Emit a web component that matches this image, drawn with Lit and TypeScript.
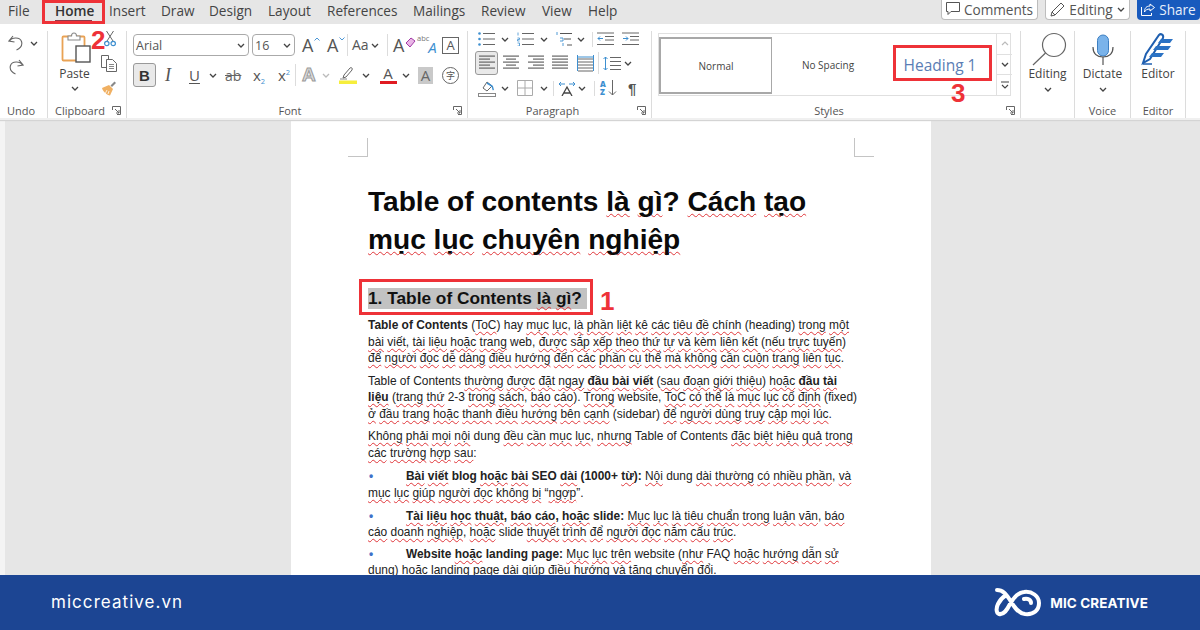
import { LitElement, html, svg, css, TemplateResult } from "lit";
import { customElement } from "lit/decorators.js";

type Cell = [number, TemplateResult];

const chev = html`<svg class="chev" width="8" height="5" viewBox="0 0 8 5"><path d="M1 1l3 3 3-3" fill="none" stroke="#444" stroke-width="1.3"/></svg>`;

const bars = (rows: [number, number][], color = "#666", w = 16) => html`<svg width="${w}" height="${rows.length * 3 + 1}" viewBox="0 0 ${w} ${rows.length * 3 + 1}">${rows.map(
  ([a, b], i) => svg`<rect x="${a}" y="${i * 3 + 0.5}" width="${b - a}" height="1.2" fill="${color}"></rect>`
)}</svg>`;

const launcher = html`<svg class="launch" width="9" height="9" viewBox="0 0 9 9"><path d="M.5 4V.5H8.5V8.5H5M3 3l4 4M7 4v3H4" fill="none" stroke="#666" stroke-width="1"/></svg>`;

const undoI = html`<svg width="16" height="16" viewBox="0 0 16 16"><path d="M5 1L1 6l5.5 1M1.5 6C4 2 12 2 13.5 6.5 15 11 11 14 8.5 15" fill="none" stroke="#666" stroke-width="1.1"/></svg>`;
const redoI = html`<svg width="16" height="16" viewBox="0 0 16 16"><path d="M11 1l4 5-5.500 1M14.500 6C12 2 4 2 2.500 6.500 1 11 5 14 7.500 15" fill="none" stroke="#666" stroke-width="1.1"/></svg>`;
const pasteI = html`<svg class="pi" width="32" height="32" viewBox="0 0 32 32"><rect x="1.500" y="5.500" width="22" height="24" rx="1" fill="#fff" stroke="#e9a254" stroke-width="1.800"/><path d="M7 9V5h3.500c0-4 5-4 5 0H19v4z" fill="#fff" stroke="#8a8a8a" stroke-width="1.100"/><rect x="15" y="15" width="14" height="16" fill="#fff" stroke="#555" stroke-width="1.400"/></svg>`;
const scissorsI = html`<svg width="12" height="16" viewBox="0 0 12 16"><path d="M3 10L9.500 0M9 10L2.500 0" stroke="#666" fill="none" stroke-width="1"/><circle cx="2.800" cy="12.500" r="2.200" fill="none" stroke="#3d8fd0" stroke-width="1.200"/><circle cx="9.200" cy="12.500" r="2.200" fill="none" stroke="#3d8fd0" stroke-width="1.200"/></svg>`;
const copyI = html`<svg width="17" height="17" viewBox="0 0 17 17"><path d="M.5.500h7v12h-7z" fill="#fff" stroke="#666"/><path d="M5.500 4.500h6l4 4v8h-10z" fill="#fff" stroke="#666"/><path d="M8 9.500h5M8 11.500h5M8 13.500h5" stroke="#888"/></svg>`;
const painterI = html`<svg width="17" height="17" viewBox="0 0 17 17"><path d="M1 9l7-3 4 4-3 6.500C6 16 2 13 1 9z" fill="#f0b062"/><path d="M4 15l2-4M7 15l1-3" stroke="#fff" stroke-width=".8"/><path d="M9.500 6.500l4-4 1.500 1.500-4 4z" fill="#888"/></svg>`;
const glassI = html`<svg width="44" height="34" viewBox="0 0 44 34"><circle cx="28" cy="13" r="11.500" fill="#fff" stroke="#666" stroke-width="1.200"/><path d="M19.500 21L7 33" stroke="#666" stroke-width="1.200"/></svg>`;
const micI = html`<svg width="22" height="32" viewBox="0 0 22 32"><rect x="5.500" y="1" width="11" height="21" rx="5.500" fill="#7ab3ea" stroke="#3d7fc2" stroke-width="1"/><path d="M1 14c0 7 4 10 10 10s10-3 10-10" transform="translate(0 -1)" fill="none" stroke="#555" stroke-width="1.200"/><path d="M11 23v8" stroke="#555" stroke-width="1.200"/></svg>`;
const editorI = html`<svg width="34" height="34" viewBox="0 0 34 34"><path d="M2 31l3-9L18 3c2-2 5 0 4 3L9 27z" fill="#fff" stroke="#1f5fb0" stroke-width="2"/><path d="M20 7h12l-3 4H17zM15 14h15l-3 4H12zM11 21h12l-3 4H8z" fill="#2b72c4"/><path d="M2 32h9" stroke="#1f5fb0" stroke-width="1.500"/></svg>`;
const penI = html`<svg class="hl" width="18" height="18" viewBox="0 0 18 18"><path d="M4 12l1-3 6-7c1-1 3 0 2 2l-6 7z" fill="#fff" stroke="#666"/><path d="M1 13h7" stroke="#888"/><rect x="0" y="14.500" width="18" height="3.500" fill="#f6ee3c"/></svg>`;
const eraserI = html`<svg width="11" height="11" viewBox="0 0 11 11"><path d="M1 6l5-5 4 3-5 6z" fill="#e9b6e6" stroke="#a13aa6"/></svg>`;
const caret = (d: string) => html`<svg width="6" height="4" viewBox="0 0 6 4"><path d="${d}" fill="none" stroke="#4c97d6" stroke-width="1"/></svg>`;
const bulletsI = html`<svg width="17" height="14" viewBox="0 0 17 14"><path d="M5 1.500h12M5 7h12M5 12.500h12" stroke="#666"/><circle cx="1.500" cy="1.500" r="1.300" fill="#3d8fd0"/><circle cx="1.500" cy="7" r="1.300" fill="#3d8fd0"/><circle cx="1.500" cy="12.500" r="1.300" fill="#3d8fd0"/></svg>`;
const numI = html`<svg width="17" height="14" viewBox="0 0 17 14"><path d="M5 1.500h12M5 7h12M5 12.500h12" stroke="#666"/><path d="M1 .5v3M.5 6h2v1.500h-2v1.500h2M.5 11h2v3h-2" stroke="#3d8fd0" fill="none" stroke-width=".8"/></svg>`;
const multiI = html`<svg width="17" height="15" viewBox="0 0 17 15"><path d="M4 1.500h12M8 7h7M11 13h5" stroke="#555"/><path d="M1 0v3M4 6h3v3H4M7 11v3" stroke="#3d8fd0" fill="none" stroke-width=".9"/></svg>`;
const outdentI = html`<svg width="17" height="14" viewBox="0 0 17 14"><path d="M0 1h17M8 4.500h9M8 8h9M0 12.500h17" stroke="#666"/><path d="M6 6.500H1M3 4.500l-2 2 2 2" stroke="#3d8fd0" fill="none"/></svg>`;
const indentI = html`<svg width="17" height="14" viewBox="0 0 17 14"><path d="M0 1h17M8 4.500h9M8 8h9M0 12.500h17" stroke="#666"/><path d="M1 6.500h5M4 4.500l2 2-2 2" stroke="#3d8fd0" fill="none"/></svg>`;
const distI = html`<svg width="17" height="17" viewBox="0 0 17 17"><path d="M1 4h15M1 7h15M1 10h15M1 13h15M1 16h15" stroke="#666"/><path d="M.5 0v4M16.500 0v4M1 2h15" stroke="#3d8fd0" fill="none"/><path d="M.5 4v12M16.500 4v12" stroke="#3d8fd0" fill="none"/></svg>`;
const spaceI = html`<svg width="18" height="15" viewBox="0 0 18 15"><path d="M7 1.500h11M7 5.500h11M7 9.500h11M7 13.500h11" stroke="#666"/><path d="M2.500 1v13M.5 3l2-2 2 2M.5 12l2 2 2-2" stroke="#3d8fd0" fill="none"/></svg>`;
const shadeI = html`<svg width="18" height="17" viewBox="0 0 18 17"><path d="M5 8l4-6 5 4-5 5z" fill="#fff" stroke="#666"/><path d="M9 3l5 3c1 1 .5 3 1.500 4" fill="none" stroke="#3d8fd0" stroke-width="1.500"/><rect x=".5" y="13.500" width="17" height="3" fill="#fff" stroke="#888"/></svg>`;
const borderI = html`<svg width="16" height="16" viewBox="0 0 16 16"><path d="M.5.500h15v15H.5zM8 .5v15M.5 8h15" fill="none" stroke="#aaa"/></svg>`;
const dirI = html`<svg width="18" height="15" viewBox="0 0 18 15"><path d="M4 15l5-9 5 9M6 12h6" fill="none" stroke="#444" stroke-width="1.300"/><path d="M1 3h6M3 1L1 3l2 2M11 3h6M15 1l2 2-2 2" fill="none" stroke="#3d8fd0"/></svg>`;
const sortI = html`<svg width="9" height="16" viewBox="0 0 9 16"><path d="M4.500 0v15M1 11.500l3.500 3.500 3.500-3.500" fill="none" stroke="#666"/></svg>`;
const commentI = html`<svg width="14" height="14" viewBox="0 0 14 14"><path d="M.5.500h13v9H5l-3 3v-3H.5z" fill="none" stroke="#555"/></svg>`;
const pencilI = html`<svg width="15" height="15" viewBox="0 0 15 15"><path d="M1 14l1-4L11 1l3 3-9 9zM2 10l3 3" fill="none" stroke="#555"/></svg>`;
const shareI = html`<svg width="14" height="13" viewBox="0 0 14 13"><path d="M9 1l4.500 3.500L9 8V6C6 6 4.500 7 3.500 9c0-4 2-6 5.500-6zM.5 4v8.500h10V10" fill="none" stroke="#fff" stroke-width="1"/></svg>`;
const logoI = html`<svg width="48" height="30" viewBox="0 0 48 30"><path d="M3 2c6 0 9 4 13 10 4 7 8 13 15 14 9 1 14-4 14-11S38 3 30 4c-6 .5-10 5-14 12-3 6-6 11-11 10C2 25 2 20 4 16c2-4 5-7 8-9M30 11c4-1 7 1 7 4" fill="none" stroke="#fff" stroke-width="4" stroke-linecap="round"/></svg>`;

@customElement("app-root")
export class AppRoot extends LitElement {
  static styles = css`
    :host { display: block; width: 1200px; height: 630px; position: relative; overflow: hidden; font-family: "Open Sans", "Noto Sans", sans-serif; color: #444; background: #e6e6e6; }
    .app { display: flex; flex-direction: column; height: 630px; }
    .row { display: flex; align-items: center; white-space: nowrap; }
    .cell { display: flex; align-items: center; flex: none; }
    .tabs { height: 24px; background: #e6e6e6; flex: none; justify-content: space-between; }
    .tabrow { display: flex; align-items: center; height: 24px; font-size: 13.6px; color: #444; padding-bottom: 4px; box-sizing: border-box; }
    .home { font-weight: 600; color: #333; position: relative; }
    .home::after { content: ""; position: absolute; left: 0; top: 19px; width: 37px; height: 1px; background: #8c3a4a; }
    .actions { display: flex; align-items: flex-start; height: 24px; gap: 7px; font-size: 13.6px; }
    .act { height: 20px; box-sizing: border-box; border: 1px solid #bdbdbd; border-top: 0; border-radius: 0 0 4px 4px; background: #fff; display: flex; align-items: center; justify-content: center; gap: 4px; color: #555; padding-bottom: 1px; }
    .a1 { width: 97px; } .a2 { width: 85px; }
    .a3 { width: 63px; background: #185abd; border: 0; color: #e8f0fb; }
    .ribbon { height: 96px; flex: none; display: flex; background: #fff; padding-top: 7px; box-sizing: border-box; border-bottom: 2px solid #f0f0f0; box-shadow: 0 1px 1px #d4d4d4; position: relative; }
    .group { display: flex; flex-direction: column; flex: none; height: 87px; box-sizing: border-box; border-right: 1px solid #dcdcdc; }
    .g-undo { width: 48px; } .g-clip { width: 79px; } .g-font { width: 341px; } .g-para { width: 184px; }
    .g-styles { width: 369px; } .g-edit { width: 54px; } .g-voice { width: 56px; } .g-editor { width: 55px; }
    .gbody { height: 72px; flex: none; }
    .glabel { display: flex; align-items: center; height: 15px; font-size: 11px; color: #555; padding-right: 5px; }
    .glabel.n { padding-right: 0; }
    .glabel span { flex: 1; text-align: center; }
    .launch { flex: none; }
    .paste, .big { display: flex; flex-direction: column; align-items: center; flex: none; }
    .clipwrap { display: flex; }
    .paste { width: 53px; font-size: 12px; color: #444; }
    .pi { margin-left: 4px; }
    .paste .txt { line-height: 16px; margin-top: 3px; }
    .paste .chev { margin-top: 4px; }
    .clipside { display: flex; flex-direction: column; gap: 7.5px; align-items: center; width: 17px; }
    .big { font-size: 12px; color: #444; height: 72px; }
    .big .ic { height: 35px; display: flex; align-items: flex-end; }
    .big .txt { line-height: 16px; }
    .big .chev { margin-top: 5px; }
    .combo { height: 22px; box-sizing: border-box; border: 1px solid #aaa; border-radius: 4px; display: flex; align-items: center; justify-content: space-between; padding: 0 3px 0 2px; font-size: 12.5px; color: #555; }
    .c-font { width: 116px; } .c-size { width: 43px; }
    .sel { width: 23px; height: 24px; box-sizing: border-box; border: 1px solid #999; border-radius: 3px; background: #e9e9e9; display: flex; align-items: center; justify-content: center; }
    .tx { font-size: 18px; line-height: 20px; color: #555; display: inline-flex; align-items: flex-start; }
    .tx svg { margin-top: 2px; margin-left: 1px; }
    .tx.s { font-size: 14px; gap: 2px; align-items: center; }
    .tx.s svg { margin: 0; }
    .tb { font-family: "Liberation Sans", sans-serif; font-weight: 700; font-size: 15px; color: #333; }
    .ti { font-family: "Liberation Serif", serif; font-style: italic; font-size: 18px; color: #555; }
    .tu { font-size: 15px; text-decoration: underline; text-underline-offset: 2px; color: #555; }
    .tab { font-size: 14px; text-decoration: line-through; color: #666; }
    .tsub { font-size: 15px; color: #555; line-height: 20px; display: inline-flex; }
    .tsub em { font-style: normal; font-size: 7.5px; line-height: 8px; color: #3d8fd0; }
    .tsub .dn { margin-top: 12px; }
    .tsub .up { margin-top: 3px; }
    .fx { font-family: "Liberation Sans", sans-serif; font-weight: 700; font-size: 19px; color: #ddd; -webkit-text-stroke: 1px #9a9a9a; }
    .fc { display: flex; flex-direction: column; width: 18px; align-items: center; font-size: 15px; line-height: 15px; color: #555; }
    .fc i { display: block; width: 17px; height: 3px; background: #e01b22; }
    .shade { width: 15px; height: 17px; background: #c9c9c9; font-size: 15px; line-height: 17px; text-align: center; color: #666; }
    .abox { width: 15px; height: 15px; border: 1px solid #666; font-size: 13px; line-height: 15px; text-align: center; color: #555; }
    .zi { width: 15px; height: 15px; border: 1px solid #666; border-radius: 50%; font: 9px/15px "Noto Sans CJK SC", sans-serif; text-align: center; color: #555; }
    .abc { display: inline-flex; align-items: flex-start; line-height: 1; }
    .abc small { font-size: 7.5px; color: #777; margin-top: 0; }
    .abc em { font-size: 15px; color: #3d8fd0; margin-left: -1px; margin-top: 5px; }
    .vsep { width: 1px; height: 22px; background: #dcdcdc; display: block; }
    .vsep.t { height: 15px; }
    .pil { font-family: "Liberation Sans", sans-serif; font-weight: 700; font-size: 15px; color: #555; }
    .az { font-size: 8px; line-height: 8px; color: #3d8fd0; display: flex; flex-direction: column; font-weight: 600; }
    .sort { display: flex; gap: 2px; align-items: center; }
    .gallery { display: flex; height: 63px; margin: 2px 9px 0 6px; border: 1px solid #e0e0e0; box-sizing: border-box; }
    .sty { display: flex; align-items: center; justify-content: center; font-size: 10px; color: #444; flex: none; }
    .s-n { width: 113px; height: 57px; margin: 3px 0 0 0; box-sizing: border-box; border: 2px solid #a8a8a8; border-right-width: 1px; }
    .s-s { width: 112px; }
    .s-h { width: 112px; font-size: 15.500px; color: #5a7db5; }
    .scroll { display: flex; flex-direction: column; width: 15px; margin-left: auto; border-left: 1px solid #e0e0e0; flex: none; }
    .scroll span { flex: 1; display: flex; align-items: center; justify-content: center; border-bottom: 1px solid #e0e0e0; }
    .scroll span:last-child { border-bottom: 0; }
    .doc { flex: 1; min-height: 0; display: flex; overflow: hidden; background: #e6e6e6; }
    .strip { width: 5px; background: #f4f4f4; flex: none; }
    .page { width: 640px; margin-left: 286px; flex: none; background: #fff; padding-top: 18px; box-sizing: border-box; font-family: "Liberation Sans", Arial, sans-serif; color: #1a1a1a; }
    .marks { display: flex; justify-content: space-between; padding: 0 57px; }
    .marks i { display: block; width: 19px; height: 18px; border-bottom: 1px solid #c4c4c4; }
    .m1 { border-right: 1px solid #c4c4c4; } .m2 { border-left: 1px solid #c4c4c4; }
    .body { padding: 25.500px 0 0 77px; }
    u { text-decoration: underline wavy #e0363a; text-decoration-thickness: 1px; text-underline-offset: 1.5px; text-decoration-skip-ink: none; }
    h1 { margin: 0; font-size: 28.100px; font-weight: 700; color: #0a0a0a; white-space: nowrap; }
    h1 div { height: 38.500px; line-height: 38.500px; }
    h2 { margin: 28.500px 0 0; height: 21px; font-size: 17.300px; line-height: 21px; font-weight: 700; color: #111; white-space: nowrap; }
    h2 span { background: #c2c2c2; display: inline-block; height: 21px; padding-right: 5px; }
    .p { margin-top: 6px; font-size: 11.950px; line-height: 16.500px; white-space: nowrap; color: #222; }
    .h2p { margin-top: 8px; }
    .p4 { margin-top: 7px; } .p5 { margin-top: 6.500px; } .p6 { margin-top: 5px; }
    .li { display: flex; font-size: 11.900px; }
    .dot { width: 38px; flex: none; color: #3f72c8; font-weight: 700; padding-left: 1px; box-sizing: border-box; }
    .footer { height: 55px; flex: none; background: #1c4593; display: flex; align-items: center; justify-content: space-between; padding: 0 52px 0 51px; color: #fff; position: relative; }
    .site { font-family: "Inter", sans-serif; font-size: 17px; letter-spacing: 1.050px; font-weight: 400; padding-bottom: 2px; }
    .brand { display: flex; align-items: center; gap: 8px; font-family: "Inter", sans-serif; font-weight: 700; font-size: 13.500px; letter-spacing: .1px; }
    .box { position: absolute; box-sizing: border-box; border: 3px solid #ee3238; }
    .b-home { left: 42px; top: 0; width: 63px; height: 24px; }
    .b-head { left: 893px; top: 45px; width: 99px; height: 36px; }
    .b-h2 { left: 359px; top: 279px; width: 234px; height: 36px; }
    .num { position: absolute; font-family: "Liberation Sans", sans-serif; font-weight: 700; font-size: 26px; line-height: 26px; color: #ee3238; }
    .n1 { left: 600px; top: 288px; } .n2 { left: 91px; top: 27px; } .n3 { left: 951px; top: 80px; }
  `;

  private row(gx: number, h: number, cells: Cell[], end: number) {
    const lead = cells[0][0] - gx;
    return html`<div class="row" style="height:${h}px"><span class="cell" style="width:${lead}px"></span>${cells.map(
      ([x, c], i) => html`<span class="cell" style="width:${(i + 1 < cells.length ? cells[i + 1][0] : end) - x}px">${c}</span>`
    )}</div>`;
  }

  render() {
    const sep = html`<i class="vsep"></i>`;
    const tsep = html`<i class="vsep t"></i>`;
    const tabs = ["File", "Home", "Insert", "Draw", "Design", "Layout", "References", "Mailings", "Review", "View", "Help"];
    const tabX = [8, 55, 109, 161, 209, 268, 327, 413, 481, 542, 588, 640];
    return html`<div class="app">
      <div class="tabs row">
        <div class="tabrow">${tabs.map((t, i) => html`<span class="cell ${t === "Home" ? "home" : ""}" style="width:${tabX[i + 1] - tabX[i]}px;margin-left:${i ? 0 : 8}px">${t}</span>`)}</div>
        <div class="actions">
          <div class="act a1">${commentI}Comments</div>
          <div class="act a2">${pencilI}Editing ${chev}</div>
          <div class="act a3">${shareI}Share</div>
        </div>
      </div>

      <div class="ribbon">
        <div class="group g-undo">
          <div class="gbody">
            ${this.row(0, 24, [[8, undoI], [30, chev]], 47)}
            ${this.row(0, 24, [[8, redoI]], 47)}
          </div>
          <div class="glabel"><span>Undo</span></div>
        </div>

        <div class="group g-clip">
          <div class="gbody clipwrap">
            <div class="paste">${pasteI}<span class="txt">Paste</span>${chev}</div>
            <div class="clipside">${scissorsI}${copyI}${painterI}</div>
          </div>
          <div class="glabel"><span>Clipboard</span>${launcher}</div>
        </div>

        <div class="group g-font">
          <div class="gbody">
            ${this.row(127, 28, [
              [133, html`<div class="combo c-font">Arial ${chev}</div>`],
              [252, html`<div class="combo c-size">16 ${chev}</div>`],
              [302, html`<span class="tx">A${caret("M.5 3.500L3 1l2.500 2.500")}</span>`],
              [327, html`<span class="tx">A${caret("M.5.500L3 3l2.500-2.500")}</span>`],
              [347, sep],
              [352, html`<span class="tx s">Aa ${chev}</span>`],
              [387, sep],
              [393, html`<span class="tx">A${eraserI}</span>`],
              [417, html`<span class="abc"><small>abc</small><em>A</em></span>`],
              [442, html`<div class="abox">A</div>`],
            ], 466)}
            ${this.row(127, 32, [
              [133, html`<div class="sel tb">B</div>`],
              [165, html`<span class="ti">I</span>`],
              [189, html`<span class="tu">U</span>`],
              [209, chev],
              [225, html`<span class="tab">ab</span>`],
              [253, html`<span class="tsub">x<em class="dn">2</em></span>`],
              [278, html`<span class="tsub">x<em class="up">2</em></span>`],
              [295, sep],
              [302, html`<span class="fx">A</span>`],
              [322, html`<svg width="8" height="5" viewBox="0 0 8 5"><path d="M1 1l3 3 3-3" fill="none" stroke="#bbb" stroke-width="1.300"/></svg>`],
              [339, penI],
              [362, chev],
              [379, html`<div class="fc">A<i></i></div>`],
              [402, chev],
              [418, html`<div class="shade">A</div>`],
              [442, html`<div class="zi">字</div>`],
            ], 466)}
          </div>
          <div class="glabel"><span>Font</span>${launcher}</div>
        </div>

        <div class="group g-para">
          <div class="gbody">
            ${this.row(468, 16, [
              [478, bulletsI], [501, chev], [517, numI], [540, chev], [556, multiI], [577, chev],
              [592, tsep], [597, outdentI], [622, indentI],
            ], 651)}
            ${this.row(468, 32, [
              [475, html`<div class="sel">${bars([[0, 16], [0, 11], [0, 16], [0, 11], [0, 16]], "#666", 16)}</div>`],
              [503, bars([[0, 16], [3, 13], [0, 16], [3, 13], [0, 16]])],
              [528, bars([[0, 16], [5, 16], [0, 16], [5, 16], [0, 16]])],
              [552, bars([[0, 16], [0, 16], [0, 16], [0, 16], [0, 16]])],
              [577, distI],
              [598, sep],
              [603, spaceI],
              [624, chev],
            ], 651)}
            ${this.row(468, 18, [
              [478, shadeI], [501, chev], [517, borderI], [540, chev], [553, tsep], [558, dirI], [578, chev], [594, tsep],
              [600, html`<span class="sort"><span class="az"><b>A</b><b>Z</b></span>${sortI}</span>`],
              [628, html`<span class="pil">¶</span>`],
            ], 651)}
          </div>
          <div class="glabel"><span>Paragraph</span>${launcher}</div>
        </div>

        <div class="group g-styles">
          <div class="gbody">
            <div class="gallery">
              <div class="sty s-n">Normal</div>
              <div class="sty s-s">No Spacing</div>
              <div class="sty s-h">Heading 1</div>
              <div class="scroll">
                <span><svg width="8" height="5" viewBox="0 0 8 5"><path d="M1 4l3-3 3 3" fill="none" stroke="#bbb" stroke-width="1.200"/></svg></span>
                <span>${chev}</span>
                <span><svg width="8" height="8" viewBox="0 0 8 8"><path d="M0 1h8M1 4l3 3 3-3" fill="none" stroke="#444" stroke-width="1.100"/></svg></span>
              </div>
            </div>
          </div>
          <div class="glabel"><span>Styles</span>${launcher}</div>
        </div>

        <div class="group g-edit">
          <div class="gbody big"><div class="ic">${glassI}</div><span class="txt">Editing</span>${chev}</div>
        </div>
        <div class="group g-voice">
          <div class="gbody big"><div class="ic">${micI}</div><span class="txt">Dictate</span>${chev}</div>
          <div class="glabel n"><span>Voice</span></div>
        </div>
        <div class="group g-editor">
          <div class="gbody big"><div class="ic">${editorI}</div><span class="txt">Editor</span></div>
          <div class="glabel n"><span>Editor</span></div>
        </div>
      </div>

      <div class="doc">
        <div class="strip"></div>
        <div class="page">
          <div class="marks"><i class="m1"></i><i class="m2"></i></div>
          <div class="body">
            <h1><div>Table of contents <u>là</u> <u>gì</u>? <u>Cách</u> <u>tạo</u></div><div><u>mục</u> <u>lục</u> <u>chuyên</u> <u>nghiệp</u></div></h1>
            <h2><span>1. Table of Contents <u>là</u> <u>gì</u>?</span></h2>
            <div class="p h2p">
              <div><b>Table of Contents</b> (<u>ToC</u>) hay <u>mục</u> <u>lục</u>, <u>là</u> <u>phần</u> <u>liệt</u> <u>kê</u> <u>các</u> <u>tiêu</u> <u>đề</u> <u>chính</u> (heading) <u>trong</u> <u>một</u></div>
              <div><u>bài</u> <u>viết</u>, <u>tài</u> <u>liệu</u> <u>hoặc</u> <u>trang</u> web, <u>được</u> <u>sắp</u> <u>xếp</u> <u>theo</u> <u>thứ</u> <u>tự</u> <u>và</u> <u>kèm</u> <u>liên</u> <u>kết</u> (<u>nếu</u> <u>trực</u> <u>tuyến</u>)</div>
              <div><u>để</u> <u>người</u> <u>đọc</u> <u>dễ</u> <u>dàng</u> <u>điều</u> <u>hướng</u> <u>đến</u> <u>các</u> <u>phần</u> <u>cụ</u> <u>thể</u> <u>mà</u> <u>không</u> <u>cần</u> <u>cuộn</u> <u>trang</u> <u>liên</u> <u>tục</u>.</div>
            </div>
            <div class="p">
              <div>Table of Contents <u>thường</u> <u>được</u> <u>đặt</u> <u>ngay</u> <b><u>đầu</u> <u>bài</u> <u>viết</u></b> (<u>sau</u> <u>đoạn</u> <u>giới</u> <u>thiệu</u>) <u>hoặc</u> <b><u>đầu</u> <u>tài</u></b></div>
              <div><b><u>liệu</u></b> (<u>trang</u> <u>thứ</u> 2-3 <u>trong</u> <u>sách</u>, <u>báo</u> <u>cáo</u>). <u>Trong</u> website, <u>ToC</u> <u>có</u> <u>thể</u> <u>là</u> <u>mục</u> <u>lục</u> <u>cố</u> <u>định</u> (fixed)</div>
              <div><u>ở</u> <u>đầu</u> <u>trang</u> <u>hoặc</u> <u>thanh</u> <u>điều</u> <u>hướng</u> <u>bên</u> <u>cạnh</u> (sidebar) <u>để</u> <u>người</u> <u>dùng</u> <u>truy</u> <u>cập</u> <u>mọi</u> <u>lúc</u>.</div>
            </div>
            <div class="p">
              <div><u>Không</u> <u>phải</u> <u>mọi</u> <u>nội</u> dung <u>đều</u> <u>cần</u> <u>mục</u> <u>lục</u>, <u>nhưng</u> Table of Contents <u>đặc</u> <u>biệt</u> <u>hiệu</u> <u>quả</u> <u>trong</u></div>
              <div><u>các</u> <u>trường</u> <u>hợp</u> <u>sau</u>:</div>
            </div>
            <div class="p p4">
              <div class="li"><span class="dot">•</span><span><b><u>Bài</u> <u>viết</u> blog <u>hoặc</u> <u>bài</u> SEO <u>dài</u> (1000+ <u>từ</u>):</b> <u>Nội</u> dung <u>dài</u> <u>thường</u> <u>có</u> <u>nhiều</u> <u>phần</u>, <u>và</u></span></div>
              <div><u>mục</u> <u>lục</u> <u>giúp</u> <u>người</u> <u>đọc</u> <u>không</u> <u>bị</u> “<u>ngợp</u>”.</div>
            </div>
            <div class="p p5">
              <div class="li"><span class="dot">•</span><span><b><u>Tài</u> <u>liệu</u> <u>học</u> <u>thuật</u>, <u>báo</u> <u>cáo</u>, <u>hoặc</u> slide:</b> <u>Mục</u> <u>lục</u> <u>là</u> <u>tiêu</u> <u>chuẩn</u> <u>trong</u> <u>luận</u> <u>văn</u>, <u>báo</u></span></div>
              <div><u>cáo</u> <u>doanh</u> <u>nghiệp</u>, <u>hoặc</u> slide <u>thuyết</u> <u>trình</u> <u>để</u> <u>người</u> <u>đọc</u> <u>nắm</u> <u>cấu</u> <u>trúc</u>.</div>
            </div>
            <div class="p p6">
              <div class="li"><span class="dot">•</span><span><b>Website <u>hoặc</u> landing page:</b> <u>Mục</u> <u>lục</u> <u>trên</u> website (<u>như</u> FAQ <u>hoặc</u> <u>hướng</u> <u>dẫn</u> <u>sử</u></span></div>
              <div><u>dụng</u>) <u>hoặc</u> landing page <u>dài</u> <u>giúp</u> <u>điều</u> <u>hướng</u> <u>và</u> <u>tăng</u> <u>chuyển</u> <u>đổi</u>.</div>
            </div>
          </div>
        </div>
      </div>

      <div class="footer">
        <span class="site">miccreative.vn</span>
        <span class="brand">${logoI}MIC CREATIVE</span>
      </div>
    </div>

    <div class="box b-home"></div>
    <div class="box b-head"></div>
    <div class="box b-h2"></div>
    <span class="num n1">1</span>
    <span class="num n2">2</span>
    <span class="num n3">3</span>`;
  }
}
